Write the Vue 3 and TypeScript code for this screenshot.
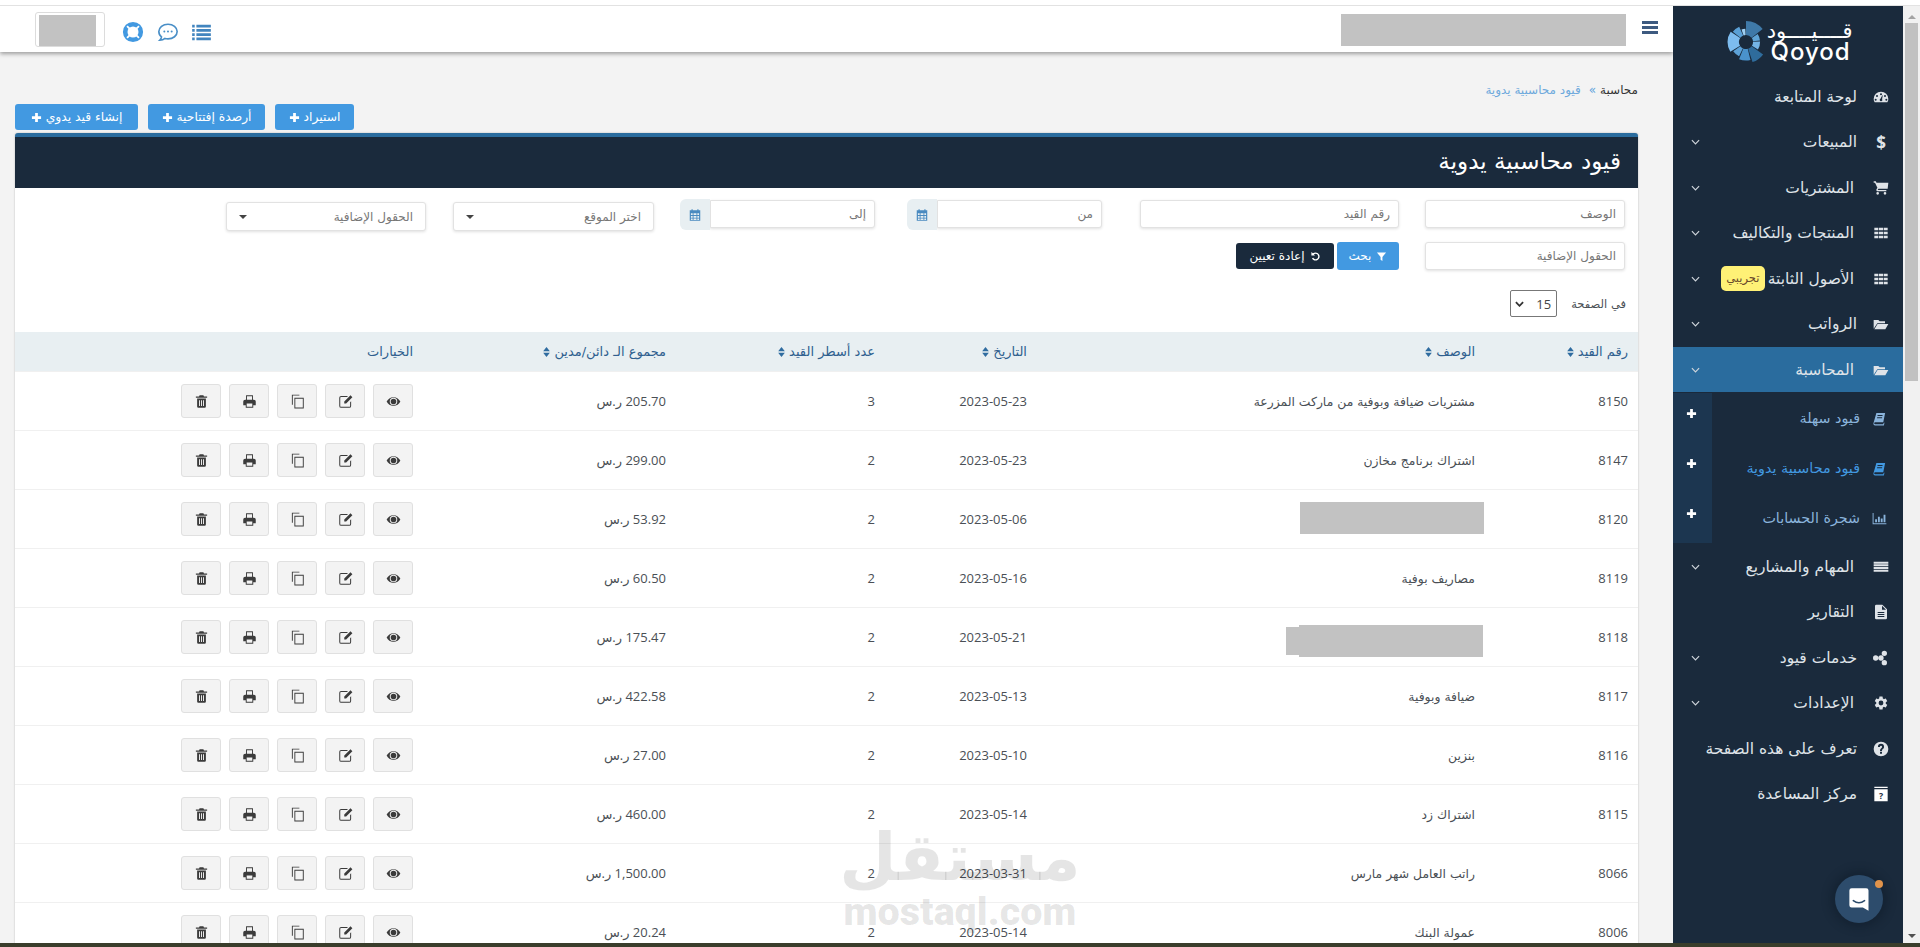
<script setup lang="ts">
type Row = { id: number; desc: string; date: string; lines: number; total: string; hide?: string }

const rows: Row[] = [
  { id: 8150, desc: 'مشتريات ضيافة وبوفية من ماركت المزرعة', date: '2023-05-23', lines: 3, total: '205.70' },
  { id: 8147, desc: 'اشتراك برنامج مخازن', date: '2023-05-23', lines: 2, total: '299.00' },
  { id: 8120, desc: '', date: '2023-05-06', lines: 2, total: '53.92', hide: 'a' },
  { id: 8119, desc: 'مصاريف بوفية', date: '2023-05-16', lines: 2, total: '60.50' },
  { id: 8118, desc: '', date: '2023-05-21', lines: 2, total: '175.47', hide: 'b' },
  { id: 8117, desc: 'ضيافة وبوفية', date: '2023-05-13', lines: 2, total: '422.58' },
  { id: 8116, desc: 'بنزين', date: '2023-05-10', lines: 2, total: '27.00' },
  { id: 8115, desc: 'اشتراك زد', date: '2023-05-14', lines: 2, total: '460.00' },
  { id: 8066, desc: 'راتب العامل شهر مارس', date: '2023-03-31', lines: 2, total: '1,500.00' },
  { id: 8006, desc: 'عمولة البنك', date: '2023-05-14', lines: 2, total: '20.24' },
]

const grid = 'M2 4h6v4H2zM9 4h6v4H9zM16 4h6v4h-6zM2 10h6v4H2zM9 10h6v4H9zM16 10h6v4h-6zM2 16h6v4H2zM9 16h6v4H9zM16 16h6v4h-6z'
const folder = 'M1 19V6h7l2 2h8v3H6.500zM2 20l4.800-8H23l-4.500 8z'
const book = 'M7 3h14l-3 15H5a1.500 1.500 0 0 0 0 3h13l.5-2 1.500-.5L19 23H5c-2 0-3-1.500-2.700-3.500zM9 6.500l-.3 1.500h8l.3-1.500zM8.300 10l-.3 1.500h8l.3-1.500z'

const nav1 = [
  { label: 'لوحة المتابعة', near: true, d: 'M12 4A11 11 0 0 0 1 15c0 2 .5 3.800 1.500 5h19c1-1.200 1.500-3 1.500-5A11 11 0 0 0 12 4zM12 6.500a1.500 1.500 0 1 1 0 3 1.500 1.500 0 0 1 0-3zM6 9a1.500 1.500 0 1 1 0 3 1.500 1.500 0 0 1 0-3zM18 9a1.500 1.500 0 1 1 0 3 1.500 1.500 0 0 1 0-3zM4 14.500a1.500 1.500 0 1 1 0 3 1.500 1.500 0 0 1 0-3zM20 14.500a1.500 1.500 0 1 1 0 3 1.500 1.500 0 0 1 0-3zM12 18.500a2 2 0 0 1-.8-3.800L14 9.500l.6.200-1 5.500a2 2 0 0 1-1.600 3.300z', more: false },
  { label: 'المبيعات', near: true, glyph: '$', more: true },
  { label: 'المشتريات', d: 'M7 18a2 2 0 1 0 0 4 2 2 0 0 0 0-4zM1 2v2h2l3.600 7.590-1.350 2.450c-.160.280-.250.610-.250.960 0 1.100.900 2 2 2h13v-2H7.420c-.140 0-.250-.110-.250-.250l.030-.120.900-1.630H22l1-9H5.210l-.940-2zm17 16a2 2 0 1 0 0 4 2 2 0 0 0 0-4z', more: true },
  { label: 'المنتجات والتكاليف', d: grid, more: true },
  { label: 'الأصول الثابتة', d: grid, more: true, badge: 'تجريبي' },
  { label: 'الرواتب', near: true, d: folder, more: true },
]

const subs = [
  { label: 'قيود سهلة', d: book },
  { label: 'قيود محاسبية يدوية', d: book, on: true },
  { label: 'شجرة الحسابات', d: 'M1 3h1.500v16.500H23V21H1zM5 13h3v5H5zM9.500 9h3v9h-3zM14 12h3v6h-3zM18.500 6h3v12h-3z' },
]

const nav2 = [
  { label: 'المهام والمشاريع', d: 'M1 4h22v3H1zM1 8h22v3H1zM1 12h22v3H1zM1 16h22v3H1z', more: true },
  { label: 'التقارير', d: 'M14 1H5a2 2 0 0 0-2 2v18a2 2 0 0 0 2 2h14a2 2 0 0 0 2-2V8zM7 12h10v1.500H7zM7 15h10v1.500H7zM7 18h10v1.500H7zM13.500 8.500V2.500l6 6z', more: false },
  { label: 'خدمات قيود', near: true, d: 'M12 8a4 4 0 1 0 0 8 4 4 0 0 0 0-8zM17 1a4 4 0 1 0 0 8 4 4 0 0 0 0-8zM4 8a4 4 0 1 0 0 8 4 4 0 0 0 0-8zM17 15a4 4 0 1 0 0 8 4 4 0 0 0 0-8z', more: true },
  { label: 'الإعدادات', d: 'M19.140 12.940c.040-.300.060-.610.060-.940 0-.320-.020-.640-.070-.940l2.030-1.580a.490.490 0 0 0 .120-.610l-1.920-3.320a.488.488 0 0 0-.590-.220l-2.390.960c-.500-.380-1.030-.700-1.620-.940l-.360-2.540a.484.484 0 0 0-.480-.410h-3.840c-.240 0-.430.170-.470.410l-.360 2.540c-.590.240-1.130.570-1.620.940l-2.390-.960c-.220-.080-.470 0-.590.220L2.740 8.870c-.120.210-.080.470.120.610l2.030 1.580c-.050.300-.090.630-.090.940s.020.640.070.940l-2.030 1.580a.490.490 0 0 0-.12.610l1.920 3.320c.120.220.370.290.590.220l2.390-.960c.500.380 1.030.700 1.620.940l.360 2.540c.050.240.240.410.48.410h3.840c.240 0 .440-.170.470-.41l.360-2.540c.590-.240 1.130-.560 1.620-.940l2.390.960c.220.080.470 0 .590-.220l1.920-3.320c.120-.220.070-.470-.120-.610l-2.010-1.580zM12 15.600a3.600 3.600 0 1 1 0-7.200 3.600 3.600 0 0 1 0 7.200z', more: true },
  { label: 'تعرف على هذه الصفحة', near: true, d: 'M12 1a11 11 0 1 0 0 22 11 11 0 0 0 0-22zm1.500 18h-3v-3h3zm1.900-7.500-.9.900c-.8.800-1 1.300-1 2.600h-3v-.6c0-1.200.5-2.200 1.200-2.900l1.300-1.300c.4-.4.600-.8.600-1.300a1.600 1.600 0 0 0-3.200 0h-3a4.600 4.600 0 0 1 9.200 0c0 1-.5 1.900-1.200 2.600z', more: false },
]

const actions = [
  { key: 'eye', d: 'M12 5C7 5 3 8 1 12c2 4 6 7 11 7s9-3 11-7c-2-4-6-7-11-7zM12 18a6 6 0 1 1 0-12 6 6 0 0 1 0 12zm0-10.500a4.500 4.500 0 1 0 0 9 4.500 4.500 0 0 0 0-9z' },
  { key: 'edit', d: 'M5 3h11l-1.600 1.600H5A1.400 1.400 0 0 0 3.600 6v13A1.400 1.400 0 0 0 5 20.400h13a1.400 1.400 0 0 0 1.400-1.400v-6l1.600-1.600V19a3 3 0 0 1-3 3H5a3 3 0 0 1-3-3V6a3 3 0 0 1 3-3zM20 2l3 3-10 10H10v-3z' },
  { key: 'copy', d: 'M3 1h12v1.500H4.500V17H3zM7 6h15v17H7zM8.500 7.500v14h12v-14z' },
  { key: 'print', d: 'M19 9H5a3 3 0 0 0-3 3v6h4v4h12v-4h4v-6a3 3 0 0 0-3-3zm-2.500 11.500h-9V15h9zM17.500 9V2h-11v7H8V3.500h8V9z' },
  { key: 'trash', d: 'M9 2h6l1 2h5v2H3V4h5zM5 7h14v13a2 2 0 0 1-2 2H7a2 2 0 0 1-2-2zM8 10v9h1.500v-9zM11.250 10v9h1.500v-9zM14.500 10v9H16v-9z' },
]

const plus = 'M9 2h6v7h7v6h-7v7H9v-7H2V9h7z'
const calendar = 'M3 4h3V2h2v2h8V2h2v2h3v18H3zM5 9v3h3V9zm4.500 0v3h5V9zM16 9v3h3V9zM5 13.500v3h3v-3zm4.500 0v3h5v-3zm6.500 0v3h3v-3zM5 18v2.500h3V18zm4.500 0v2.500h5V18zm6.500 0v2.500h3V18z'

// wedges of the round logo mark: start angle, end angle, outer radius, colour
const wedges = [
  [-90, -38, 24, '#3f79a8'], [-34, -6, 16, '#5fa4d6'], [-2, 32, 16, '#74b4e6'], [36, 72, 24, '#2f6c9c'],
  [76, 112, 21, '#4a92cc'], [116, 144, 18, '#5da2d8'], [148, 214, 21, '#7dbcef'], [218, 246, 19, '#5aa0d6'], [250, 267, 15, '#9ecff2'],
]

function wedgePath(a0: number, a1: number, r: number) {
  const p = (a: number, rad: number) => {
    const t = (a * Math.PI) / 180
    return `${(rad * Math.cos(t)).toFixed(2)} ${(rad * Math.sin(t)).toFixed(2)}`
  }
  return `M${p(a0, 8)}L${p(a0, r)}A${r} ${r} 0 0 1 ${p(a1, r)}L${p(a1, 8)}A8 8 0 0 0 ${p(a0, 8)}Z`
}
</script>

<template>
  <div class="page" dir="rtl">
    <div class="top-strip"></div>
    <div class="body">
      <div class="scrollbar">
        <span class="arrow up"></span>
        <span class="thumb"></span>
        <span class="arrow down"></span>
      </div>

      <aside class="sidebar">
        <div class="logo" dir="ltr">
          <svg class="logo-mark" viewBox="-25 -25 50 50">
            <path v-for="(w, i) in wedges" :key="i" :d="wedgePath(w[0] as number, w[1] as number, w[2] as number)" :fill="w[3] as string" />
          </svg>
          <div class="logo-text">
            <span class="logo-ar" dir="rtl">قــــيــــود</span>
            <span class="logo-en">Qoyod</span>
          </div>
        </div>

        <a v-for="n in nav1" :key="n.label" class="nav-item">
          <span class="nav-icon" :class="{ near: n.near }">
            <b v-if="n.glyph" class="glyph">{{ n.glyph }}</b>
            <svg v-else viewBox="0 0 24 24"><path :d="n.d" fill-rule="evenodd" /></svg>
          </span>
          <span class="nav-label">{{ n.label }}</span>
          <span v-if="n.badge" class="badge">{{ n.badge }}</span>
          <svg v-if="n.more" class="chev" viewBox="0 0 10 6"><path d="M1 1l4 4 4-4" /></svg>
        </a>

        <a class="nav-item active">
          <span class="nav-icon"><svg viewBox="0 0 24 24"><path :d="folder" /></svg></span>
          <span class="nav-label">المحاسبة</span>
          <svg class="chev" viewBox="0 0 10 6"><path d="M1 1l4 4 4-4" /></svg>
        </a>

        <div class="subnav">
          <a v-for="s in subs" :key="s.label" class="sub-item" :class="{ on: s.on }">
            <span class="sub-icon"><svg viewBox="0 0 24 24"><path :d="s.d" fill-rule="evenodd" /></svg></span>
            <span class="sub-label">{{ s.label }}</span>
            <span class="sub-add"><svg viewBox="0 0 24 24"><path :d="plus" /></svg></span>
          </a>
        </div>

        <a v-for="n in nav2" :key="n.label" class="nav-item">
          <span class="nav-icon" :class="{ near: n.near }"><svg viewBox="0 0 24 24"><path :d="n.d" fill-rule="evenodd" /></svg></span>
          <span class="nav-label">{{ n.label }}</span>
          <svg v-if="n.more" class="chev" viewBox="0 0 10 6"><path d="M1 1l4 4 4-4" /></svg>
        </a>
        <a class="nav-item">
          <span class="nav-icon near">
            <svg class="help-box" viewBox="0 0 24 24">
              <path d="M2 1h20v2H2zM2 5h20v18H2z" />
              <text x="12" y="19" text-anchor="middle" class="help-q">?</text>
            </svg>
          </span>
          <span class="nav-label">مركز المساعدة</span>
        </a>

        <div class="chat">
          <svg viewBox="0 0 24 24"><path d="M5 2h13a2 2 0 0 1 2 2v18l-5-3H5a2 2 0 0 1-2-2V4a2 2 0 0 1 2-2z" fill="#fff" /><path d="M6.500 13c3 2.200 7 2.200 10 0" fill="none" stroke="#2d4c6c" stroke-width="1.400" stroke-linecap="round" /></svg>
          <span class="chat-dot"></span>
        </div>
      </aside>

      <main class="main">
        <header class="topbar">
          <svg class="burger" viewBox="0 0 16 13"><path d="M0 0h16v3H0zM0 5h16v3H0zM0 10h16v3H0z" /></svg>
          <span class="redact user"></span>
          <div class="tools" dir="ltr">
            <span class="account"><span class="redact"></span></span>
            <svg class="tool ring" viewBox="0 0 24 24">
              <circle cx="12" cy="12" r="8.500" fill="none" stroke="#4299e1" stroke-width="5" />
              <path d="M5.500 5.500l3 3M18.500 5.500l-3 3M5.500 18.500l3-3M18.500 18.500l-3-3" stroke="#fff" stroke-width="2" />
            </svg>
            <svg class="tool bubble" viewBox="0 0 24 24">
              <path d="M12 3.500c5.600 0 10 3.500 10 8s-4.400 8-10 8c-1.200 0-2.300-.2-3.300-.5-1.300 1.200-3.200 2-5.700 2 1-1 1.700-2.200 1.900-3.700C3 15.900 2 13.800 2 11.500c0-4.500 4.400-8 10-8z" fill="none" stroke="#4a8fc7" stroke-width="1.800" />
              <circle cx="8" cy="11.500" r="1.100" fill="#4a8fc7" /><circle cx="12" cy="11.500" r="1.100" fill="#4a8fc7" /><circle cx="16" cy="11.500" r="1.100" fill="#4a8fc7" />
            </svg>
            <svg class="tool list" viewBox="0 0 24 20">
              <path d="M1 1h3v3H1zM6 1h17v3H6zM1 6h3v3H1zM6 6h17v3H6zM1 11h3v3H1zM6 11h17v3H6zM1 16h3v3H1zM6 16h17v3H6z" fill="#4285bf" />
            </svg>
          </div>
        </header>

        <div class="crumbs">
          <span>محاسبة</span>
          <span class="crumb-sep">»</span>
          <span class="crumb-cur">قيود محاسبية يدوية</span>
        </div>

        <div class="btn-row">
          <button class="btn-add">استيراد <svg viewBox="0 0 24 24"><path :d="plus" /></svg></button>
          <button class="btn-add wide">أرصدة إفتتاحية <svg viewBox="0 0 24 24"><path :d="plus" /></svg></button>
          <button class="btn-add wider">إنشاء قيد يدوي <svg viewBox="0 0 24 24"><path :d="plus" /></svg></button>
        </div>

        <section class="panel">
          <h1 class="panel-title">قيود محاسبية يدوية</h1>

          <div class="filters">
            <div class="field f1"><span class="ph">الوصف</span></div>
            <div class="field f2"><span class="ph">رقم القيد</span></div>
            <div class="date-group f3">
              <div class="field"><span class="ph">من</span></div>
              <span class="addon"><svg viewBox="0 0 24 24"><path :d="calendar" fill-rule="evenodd" /></svg></span>
            </div>
            <div class="date-group f4">
              <div class="field"><span class="ph">إلى</span></div>
              <span class="addon"><svg viewBox="0 0 24 24"><path :d="calendar" fill-rule="evenodd" /></svg></span>
            </div>
            <div class="field select f5"><span class="ph">اختر الموقع</span><i class="caret"></i></div>
            <div class="field select f6"><span class="ph">الحقول الإضافية</span><i class="caret"></i></div>
          </div>

          <div class="filters second">
            <div class="field f1"><span class="ph">الحقول الإضافية</span></div>
            <div class="filter-btns">
              <button class="btn-search">
                <svg viewBox="0 0 24 24"><path d="M2 3h20l-8 10v9l-4-3v-6z" /></svg>
                بحث
              </button>
              <button class="btn-reset">
                <svg viewBox="0 0 24 24"><path d="M12 3a9 9 0 1 1-7.800 13.500l2.800-1.600A5.800 5.800 0 1 0 12 6.200c-1.300 0-2.500.4-3.400 1.200L11 10H3V2l3.300 3.100A9 9 0 0 1 12 3z" /></svg>
                إعادة تعيين
              </button>
            </div>
          </div>

          <div class="per-page">
            <span>في الصفحة</span>
            <div class="per-select" dir="rtl">
              <span>15</span>
              <svg viewBox="0 0 10 6"><path d="M1 1l4 4 4-4" /></svg>
            </div>
          </div>

          <table class="grid">
            <colgroup>
              <col style="width: 153px" /><col style="width: 448px" /><col style="width: 152px" />
              <col style="width: 209px" /><col style="width: 253px" /><col />
            </colgroup>
            <thead>
              <tr>
                <th v-for="h in ['رقم القيد', 'الوصف', 'التاريخ', 'عدد أسطر القيد', 'مجموع الـ دائن/مدين']" :key="h">
                  {{ h }}
                  <svg class="sort" viewBox="0 0 8 12"><path d="M4 0l4 5H0zM4 12L0 7h8z" /></svg>
                </th>
                <th>الخيارات</th>
              </tr>
            </thead>
            <tbody>
              <tr v-for="r in rows" :key="r.id">
                <td>{{ r.id }}</td>
                <td>
                  <span v-if="r.hide" class="redact row-hide" :class="r.hide"></span>
                  <template v-else>{{ r.desc }}</template>
                </td>
                <td>{{ r.date }}</td>
                <td>{{ r.lines }}</td>
                <td>{{ r.total }} ر.س</td>
                <td>
                  <div class="row-actions">
                    <span v-for="a in actions" :key="a.key" class="act">
                      <svg viewBox="0 0 24 24"><path :d="a.d" fill-rule="evenodd" /></svg>
                    </span>
                  </div>
                </td>
              </tr>
            </tbody>
          </table>
        </section>

        <div class="watermark" dir="rtl">
          <span class="wm-ar">مستقل</span>
          <span class="wm-en">mostaql.com</span>
        </div>
      </main>
    </div>
    <div class="bottom-strip"></div>
  </div>
</template>

<style>
html, body { margin: 0; background: #f3f3f3; overflow: hidden; }
</style>

<style scoped>
.page {
  width: 1920px;
  height: 947px;
  display: flex;
  flex-direction: column;
  overflow: hidden;
  font-family: "DejaVu Sans", "Open Sans", sans-serif;
  color: #4a4f55;
}
.top-strip { height: 5px; background: #fff; border-bottom: 1px solid #e2e2e2; flex: none; }
.bottom-strip { height: 4px; background: #3a3d2b; flex: none; }
.body { flex: 1; display: flex; min-height: 0; }

.scrollbar { width: 17px; flex: none; background: #f1f1f1; display: flex; flex-direction: column; align-items: center; position: relative; }
.thumb { width: 13px; height: 358px; margin-top: 17px; background: #c1c1c1; }
.arrow { position: absolute; width: 0; height: 0; border-inline: 4px solid transparent; }
.arrow.up { top: 9px; border-bottom: 4px solid #a3a3a3; }
.arrow.down { bottom: 5px; border-top: 4px solid #505050; }

.sidebar { width: 230px; flex: none; background: #1a2a3c; position: relative; display: flex; flex-direction: column; }
.logo { height: 67px; display: flex; align-items: center; justify-content: center; gap: 3px; padding-top: 4px; box-sizing: border-box; margin-bottom: 1px; }
.logo-mark { width: 44px; height: 44px; }
.logo-text { display: flex; flex-direction: column; color: #fff; line-height: 1; width: 82px; }
.logo-ar { font-size: 21px; line-height: 20px; text-align: right; white-space: nowrap; }
.logo-en { font-family: "Inter", sans-serif; font-size: 24px; line-height: 22px; font-weight: 500; letter-spacing: 1px; }

.nav-item { height: 45.500px; flex: none; display: flex; align-items: center; padding: 0 14px; color: #dfe3e8; font-size: 15.500px; }
.nav-icon { width: 16px; height: 16px; display: flex; align-items: center; justify-content: center; flex: none; margin-inline-end: 19px; }
.nav-icon.near { margin-inline-end: 16px; }
.nav-icon svg { width: 16px; height: 16px; fill: #dfe3e8; }
.nav-icon .help-box { fill: #fff; }
.glyph { font-size: 17px; font-family: "Open Sans", sans-serif; color: #dfe3e8; }
.nav-icon .help-q { font-size: 13px; font-weight: 700; fill: #1a2a3c; font-family: "Open Sans", sans-serif; }
.nav-label { white-space: nowrap; }
.chev { width: 9px; height: 6px; margin-inline-start: auto; margin-inline-end: 4px; fill: none; stroke: #cfd5db; stroke-width: 1.300; flex: none; }
.badge { background: #fff176; color: #6a4a2a; font-size: 11.500px; border-radius: 5px; width: 44px; text-align: center; line-height: 24px; height: 25px; margin-inline-start: 3px; white-space: nowrap; flex: none; }
.active { background: #2a6c9e; height: 45px; }
.subnav { margin: 1px 0; }
.sub-item { height: 50px; display: flex; align-items: center; padding-inline-start: 16px; font-size: 14.300px; color: #8ab4dc; }
.sub-item.on { color: #4299e1; }
.sub-icon { width: 15px; height: 15px; flex: none; margin-inline-end: 12px; }
.sub-icon svg { width: 15px; height: 15px; fill: currentColor; display: block; }
.sub-label { white-space: nowrap; }
.sub-add { width: 39px; height: 50px; margin-inline-start: auto; background: #1c3650; display: flex; justify-content: center; padding-top: 15px; box-sizing: border-box; }
.sub-add svg { width: 11px; height: 11px; fill: #fff; margin-inline-start: 3px; }

.chat { position: absolute; left: 162px; bottom: 20px; width: 48px; height: 48px; border-radius: 50%; background: #2d4c6c; box-shadow: 0 0 10px 4px rgba(10, 20, 32, .35); display: flex; align-items: center; justify-content: center; }
.chat svg { width: 27px; height: 27px; }
.chat-dot { position: absolute; top: 5px; right: 0; width: 8px; height: 8px; border-radius: 50%; background: #e0934b; }

.main { flex: 1; min-width: 0; background: #f3f3f3; position: relative; overflow: hidden; display: flex; flex-direction: column; }
.topbar { height: 46px; flex: none; background: #fff; box-shadow: 0 2px 4px rgba(0, 0, 0, .35); display: flex; align-items: center; position: relative; z-index: 1; }
.burger { width: 16px; height: 13px; fill: #3d5a80; margin-inline-start: 15px; flex: none; margin-bottom: 3px; }
.redact { background: #c2c2c2; display: block; }
.user { width: 285px; height: 32px; margin-inline-start: 16px; margin-top: 2px; }
.tools { margin-left: 35px; margin-right: auto; display: flex; align-items: center; direction: ltr; padding-top: 6px; height: 35px; box-sizing: border-box; }
.account { width: 70px; height: 35px; border: 1px solid #dcdcdc; border-radius: 3px; padding: 2px 0 0 3px; box-sizing: border-box; margin-top: -6px; overflow: hidden; }
.account .redact { width: 57px; height: 32px; }
.tool { flex: none; }
.ring { width: 22px; height: 22px; margin-left: 17px; }
.bubble { width: 22px; height: 22px; margin-left: 13px; }
.list { width: 21px; height: 17px; margin-left: 12px; }

.crumbs { height: 52px; flex: none; display: flex; align-items: center; gap: 4px; padding: 24px 35px 0; font-size: 12px; box-sizing: border-box; color: #333; }
.crumb-sep { color: #5ea3dd; font-size: 12px; }
.crumb-cur { color: #6ea9dc; margin-inline-start: 4px; }

.btn-row { flex: none; height: 26px; padding-left: 15px; display: flex; gap: 10px; justify-content: flex-end; }
.btn-add { height: 26px; width: 79px; flex: none; border: 0; border-radius: 3px; background: #4299e1; color: #fff; font: 12.300px "DejaVu Sans", sans-serif; display: flex; align-items: center; justify-content: center; gap: 4px; padding: 0; white-space: nowrap; }
.btn-add.wide { width: 117px; }
.btn-add.wider { width: 123px; }
.btn-add svg { width: 11px; height: 11px; fill: #fff; }

.panel { margin: 3px 35px 0 15px; background: #fff; border-top: 4px solid #2a6c9e; border-radius: 3px 3px 0 0; box-shadow: 0 0 2px rgba(0, 0, 0, .25); flex: none; }
.panel-title { margin: 0; height: 51px; background: #1a2a3c; color: #fff; font-size: 23px; font-weight: 400; line-height: 49px; padding: 0 17px; }

.filters { display: flex; padding: 12px 13px 0; align-items: flex-start; }
.filters.second { padding-top: 11px; }
.field { height: 28px; box-sizing: border-box; background: #fff; border: 1px solid #e2e2e2; border-radius: 3px; box-shadow: 0 1px 3px rgba(0, 0, 0, .12); display: flex; align-items: center; padding: 0 8px; color: #777; font-size: 12px; flex: none; }
.ph { white-space: nowrap; }
.f1 { width: 200px; margin-inline-end: 26px; }
.f2 { width: 259px; margin-inline-end: 38px; }
.f3 { width: 195px; margin-inline-end: 32px; }
.f4 { width: 195px; margin-inline-end: 26px; }
.f5 { width: 201px; margin-inline-end: 27px; margin-top: 2px; height: 29px; }
.f6 { width: 200px; margin-top: 2px; height: 29px; }
.date-group { display: flex; flex: none; }
.date-group .field { flex: 1; border-radius: 0 3px 3px 0; }
.addon { width: 30px; height: 31px; margin-top: -1px; background: #e8eff2; border-radius: 6px 0 0 6px; display: flex; align-items: center; justify-content: center; flex: none; }
.addon svg { width: 14px; height: 14px; fill: #4a8ac0; }
.select { padding-inline: 12px; }
.caret { margin-inline-start: auto; width: 0; height: 0; border-inline: 4px solid transparent; border-top: 4px solid #444; }
.filter-btns { display: flex; gap: 3px; align-items: center; }
.btn-search { width: 62px; height: 28px; border: 0; border-radius: 3px; background: #4299e1; color: #fff; font: 12px "DejaVu Sans", sans-serif; display: flex; align-items: center; justify-content: center; gap: 5px; padding: 0; }
.btn-search svg { width: 11px; height: 11px; fill: #fff; }
.btn-reset { width: 98px; height: 26px; border: 0; border-radius: 3px; background: #1a2a3c; color: #fff; font: 12px "DejaVu Sans", sans-serif; display: flex; align-items: center; justify-content: center; gap: 5px; padding: 0; white-space: nowrap; }
.btn-reset svg { width: 11px; height: 11px; fill: #fff; }

.per-page { display: flex; align-items: center; height: 27px; margin-top: 20px; padding-inline-start: 12px; gap: 14px; font-size: 11.500px; }
.per-select { width: 47px; height: 27px; box-sizing: border-box; border: 1px solid #777; border-radius: 2px; display: flex; align-items: center; justify-content: space-between; padding: 0 5px 0 4px; font: 13px "Open Sans", sans-serif; color: #444; }
.per-select svg { width: 9px; height: 6px; fill: none; stroke: #333; stroke-width: 2; }

.grid { width: 100%; border-collapse: collapse; table-layout: fixed; margin-top: 15px; }
.grid th { height: 39px; padding: 0; padding-inline-start: 10px; background: #e8eff2; border-bottom: 1px solid #f0f0f0; text-align: start; font-size: 13px; font-weight: 400; color: #2f5f8f; white-space: nowrap; }
.sort { width: 7px; height: 10px; fill: #2f6ca0; vertical-align: -1px; }
.grid td { height: 58px; padding: 0; padding-inline-start: 10px; border-bottom: 1px solid #f0f0f0; font: 13px "Open Sans", "DejaVu Sans", sans-serif; color: #4a4f55; white-space: nowrap; }
.grid td:nth-child(2) { font: 12.400px "DejaVu Sans", sans-serif; }
.row-hide.a { width: 184px; height: 32px; margin-inline-start: -9px; margin-top: -2px; }
.row-hide.b { width: 184px; height: 32px; margin-inline-start: -8px; margin-top: 8px; position: relative; }
.row-hide.b::after { content: ""; position: absolute; right: 100%; top: 2px; width: 13px; height: 28px; background: #c2c2c2; }
.row-actions { display: flex; gap: 8px; }
.act { width: 40px; height: 34px; box-sizing: border-box; background: #f3f3f3; border: 1px solid #e0e0e0; border-radius: 3px; display: flex; align-items: center; justify-content: center; flex: none; }
.act svg { width: 15px; height: 15px; fill: #3b3b3b; }

.watermark { position: absolute; left: 845px; top: 808px; width: 230px; display: flex; flex-direction: column; align-items: center; color: rgba(0, 0, 0, .1); pointer-events: none; z-index: 2; font-weight: 700; }
.wm-ar { font-size: 66px; line-height: 88px; white-space: nowrap; }
.wm-en { font: 900 39.500px/30px "Roboto", sans-serif; margin-top: -5px; }
</style>
